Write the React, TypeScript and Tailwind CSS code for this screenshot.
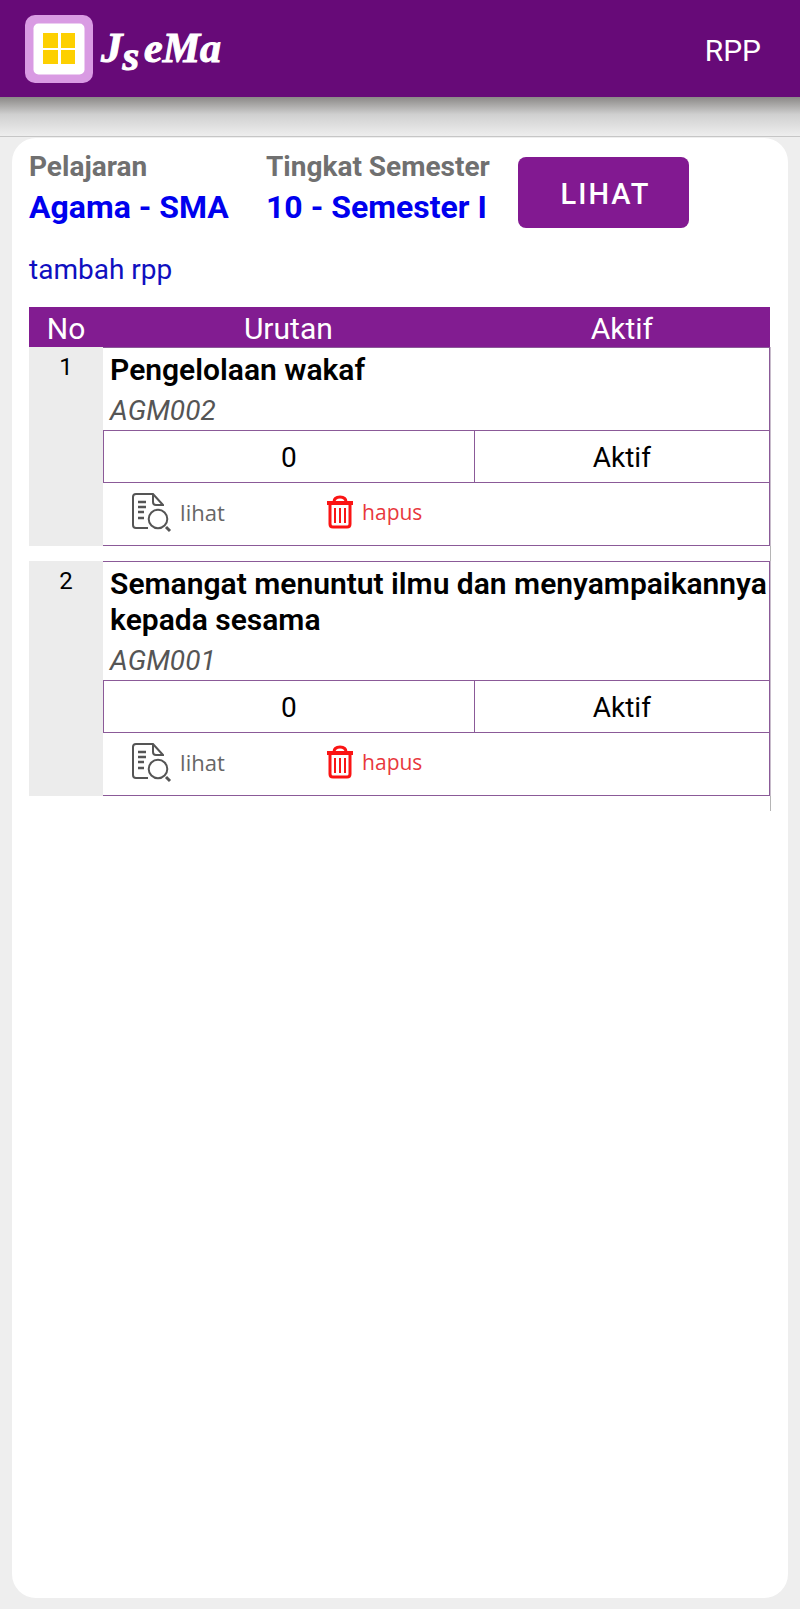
interface Rpp {
  no: number;
  title: string;
  code: string;
  order: number;
  status: string;
}

const ITEMS: Rpp[] = [
  { no: 1, title: "Pengelolaan wakaf", code: "AGM002", order: 0, status: "Aktif" },
  {
    no: 2,
    title: "Semangat menuntut ilmu dan menyampaikannya kepada sesama",
    code: "AGM001",
    order: 0,
    status: "Aktif",
  },
];

export default function App() {
  return (
    <div className="flex min-h-screen flex-col bg-[#eeeeee] font-[Roboto,sans-serif] text-black">
      <header className="flex h-[97px] items-center justify-between bg-[#670a78] pr-[39px] pl-[25px]">
        <Logo />
        <span className="pt-1 text-[30px] leading-9 text-white">RPP</span>
      </header>
      <div className="h-10 border-b border-[#c6c6c6] bg-linear-to-b from-[#8b8987] via-[#d0d0d0] via-45% to-[#eeeeee]" />

      <main className="mx-3 mt-px mb-[11px] flex-1 rounded-3xl bg-white px-[17px] pt-[15px]">
        <div className="flex items-start">
          <Filter label="Pelajaran" value="Agama - SMA" className="w-[237px]" />
          <Filter label="Tingkat Semester" value="10 - Semester I" className="w-[252px]" />
          <button
            type="button"
            className="mt-1 h-[71px] w-[171px] rounded-lg bg-[#821991] pt-1 pl-1 text-[29px] font-medium tracking-[2px] text-white"
          >
            LIHAT
          </button>
        </div>

        <a href="#tambah" className="mt-6 inline-block text-[28px] leading-9 text-[#0f0fc0]">
          tambah rpp
        </a>

        <RppTable items={ITEMS} />
      </main>
    </div>
  );
}

function Filter({
  label,
  value,
  className,
}: {
  label: string;
  value: string;
  className: string;
}) {
  return (
    <div className={className}>
      <p className="text-[28px] leading-7 font-bold whitespace-nowrap text-[#707070]">{label}</p>
      <a href="#filter" className="mt-1.5 block text-[32px] leading-10 font-bold whitespace-nowrap text-[#0000ee]">
        {value}
      </a>
    </div>
  );
}

function RppTable({ items }: { items: Rpp[] }) {
  return (
    <table className="mt-[19px] w-full max-w-[741px] table-fixed border-separate border-spacing-0">
      <colgroup>
        <col className="w-[10%]" />
        <col className="w-1/2" />
        <col className="w-2/5" />
      </colgroup>
      <thead>
        <tr className="h-10 bg-[#821c91] text-[30px] leading-9 text-white">
          <th className="p-0 pt-1 font-normal">No</th>
          <th className="p-0 pt-1 font-normal">Urutan</th>
          <th className="p-0 pt-1 font-normal">Aktif</th>
        </tr>
      </thead>
      {items.map((item) => (
        <RppRows key={item.no} item={item} />
      ))}
    </table>
  );
}

function RppRows({ item }: { item: Rpp }) {
  return (
    <tbody className="text-[28px]">
      <tr>
        <td rowSpan={3} className="bg-[#ececec] p-0 pt-1 text-center align-top text-2xl">
          {item.no}
        </td>
        <td
          colSpan={2}
          className="border-t border-r border-[#8b5a98] p-0 pt-1 pb-px pl-[7px] shadow-[1px_0_0_#c8bccb]"
        >
          <p className="text-[30px] leading-9 font-semibold">{item.title}</p>
          <p className="mt-[5px] leading-9 text-[#555555] italic">{item.code}</p>
        </td>
      </tr>
      <tr className="h-[52px] text-center">
        <td className="border-t border-l border-[#8b5a98] p-0 pt-0.5">{item.order}</td>
        <td className="border-t border-r border-l border-[#8b5a98] p-0 pt-0.5 shadow-[1px_0_0_#c8bccb]">
          {item.status}
        </td>
      </tr>
      <tr className="h-[64px]">
        <td
          colSpan={2}
          className="border-y border-r border-[#8b5a98] p-0 pb-1 pl-7 shadow-[1px_0_0_#c8bccb]"
        >
          <div className="flex items-center font-['Open_Sans',sans-serif] text-[22px] leading-8">
            <div className="w-[195px]">
              <button type="button" className="flex items-center gap-2 text-[#666666]">
                <ViewIcon />
                lihat
              </button>
            </div>
            <button type="button" className="flex items-center gap-2 text-[21px] text-[#e8383d]">
              <TrashIcon />
              hapus
            </button>
          </div>
        </td>
      </tr>
      <tr className="h-[15px]">
        <td colSpan={3} className="p-0 shadow-[1px_0_0_#b5b5b5]" />
      </tr>
    </tbody>
  );
}

function Logo() {
  return (
    <svg width="200" height="68" viewBox="0 0 200 68" role="img" aria-label="Js eMa">
      <rect width="68" height="68" rx="10" fill="#d99be3" />
      <rect x="8.500" y="8.500" width="51" height="51" rx="5" fill="#fff" />
      <path d="M18 18h15v15H18zM36 18h14v15H36zM18 35h15v14H18zM36 35h14v14H36z" fill="#fdd000" />
      <text
        x="76"
        y="47"
        fill="#fff"
        stroke="#fff"
        fontFamily="'Liberation Serif', serif"
        fontSize="43"
        fontWeight="700"
        fontStyle="italic"
      >
        J<tspan dy="8">s</tspan>
        <tspan x="119" dy="-8" fontSize="42">
          eMa
        </tspan>
      </text>
    </svg>
  );
}

function ViewIcon() {
  return (
    <svg width="41" height="42" viewBox="0 0 41 42" fill="none" stroke="#555" strokeWidth="2">
      <path d="M17 37H5q-3 0-3-3V6q0-3 3-3h17l10 11v1" />
      <path d="M22 3v8q0 3 3 3h7" />
      <path d="M7 11h8M7 16h8M7 21h6M7 27h6" strokeWidth="2.500" />
      <circle cx="27" cy="28" r="9.300" />
      <path d="M35 36l4 4" strokeWidth="3" />
    </svg>
  );
}

function TrashIcon() {
  return (
    <svg width="28" height="34" viewBox="0 0 28 34" fill="none" stroke="#fb1414">
      <path d="M8 7q0-5 6-5t6 5" strokeWidth="3" />
      <path d="M1 8h26" strokeWidth="4" />
      <path d="M4 10v19q0 3 3 3h14q3 0 3-3V10" strokeWidth="3" />
      <path d="M9 13v15M14 13v15M19 13v15" strokeWidth="2" />
    </svg>
  );
}
